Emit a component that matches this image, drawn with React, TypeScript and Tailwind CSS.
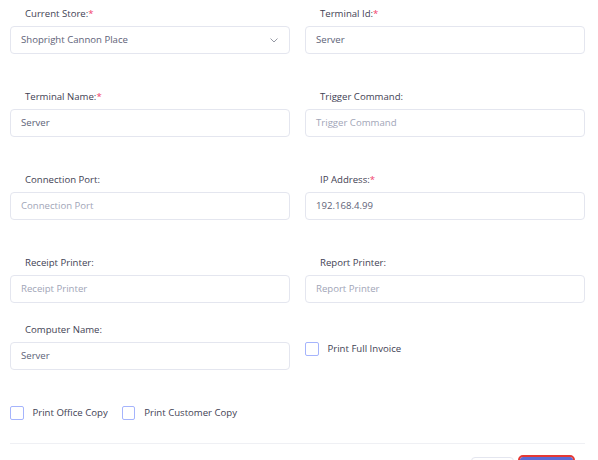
import React from "react";

const font = { fontFamily: '"Open Sans", "Noto Sans", sans-serif' };

function Label({ text, required }: { text: string; required?: boolean }) {
  return (
    <div className="h-[13px] pl-[15px] text-[9.6px] leading-[13px] font-medium text-[#3f4254] mb-[6px] whitespace-nowrap">
      {text}
      {required && <span className="text-[#f1416c]">*</span>}
    </div>
  );
}

function Input({ value, placeholder }: { value?: string; placeholder?: string }) {
  return (
    <div className="h-[28px] w-[280px] border border-[#e4e6ef] rounded-[4px] bg-white flex items-center pl-[10px] text-[9.6px]">
      {value ? (
        <span className="text-[#5e6278]">{value}</span>
      ) : (
        <span className="text-[#a1a5b7]">{placeholder}</span>
      )}
    </div>
  );
}

function Field({ label, required, value, placeholder }: { label: string; required?: boolean; value?: string; placeholder?: string }) {
  return (
    <div>
      <Label text={label} required={required} />
      <Input value={value} placeholder={placeholder} />
    </div>
  );
}

function Checkbox({ label }: { label: string }) {
  return (
    <div className="flex items-center">
      <div className="w-[13.5px] h-[13.5px] border-[1.5px] border-[#a5b4fc] rounded-[2px] bg-white" />
      <span className="ml-[9px] text-[9.6px] text-[#3f4254]">{label}</span>
    </div>
  );
}

export default function App() {
  return (
    <div className="w-[598px] h-[460px] overflow-hidden bg-white" style={font}>
      <div className="pt-[7px] pl-[10px] pr-[13px]">
        <div className="grid grid-cols-[280px_280px] gap-x-[15px]">
          <div>
            <Label text="Current Store:" required />
            <div className="h-[28px] w-[280px] border border-[#e4e6ef] rounded-[4px] bg-white flex items-center justify-between pl-[10px] pr-[11px] text-[9.6px]">
              <span className="text-[#5e6278]">Shopright Cannon Place</span>
              <svg width="8" height="5" viewBox="0 0 8 5" fill="none">
                <polyline points="0.8,0.8 4,4 7.2,0.8" stroke="#8a8d9a" strokeWidth="0.9" strokeLinecap="round" strokeLinejoin="round" />
              </svg>
            </div>
          </div>
          <Field label="Terminal Id:" required value="Server" />
        </div>

        <div className="grid grid-cols-[280px_280px] gap-x-[15px] mt-[36px]">
          <Field label="Terminal Name:" required value="Server" />
          <Field label="Trigger Command:" placeholder="Trigger Command" />
        </div>

        <div className="grid grid-cols-[280px_280px] gap-x-[15px] mt-[36px]">
          <Field label="Connection Port:" placeholder="Connection Port" />
          <Field label="IP Address:" required value="192.168.4.99" />
        </div>

        <div className="grid grid-cols-[280px_280px] gap-x-[15px] mt-[36px]">
          <Field label="Receipt Printer:" placeholder="Receipt Printer" />
          <Field label="Report Printer:" placeholder="Report Printer" />
        </div>

        <div className="grid grid-cols-[280px_280px] gap-x-[15px] mt-[20px]">
          <Field label="Computer Name:" value="Server" />
          <div className="pt-[19px]">
            <Checkbox label="Print Full Invoice" />
          </div>
        </div>

        <div className="flex items-center gap-[14px] mt-[36px]">
          <Checkbox label="Print Office Copy" />
          <Checkbox label="Print Customer Copy" />
        </div>

        <div className="mt-[23px] h-px bg-[#eff0f4]" />

        <div className="flex justify-end gap-[6px] mt-[13px] pr-[12px]">
          <button aria-label="Close" className="h-[28px] w-[43px] border border-[#e4e6ef] rounded-[4px] bg-white" />
          <button aria-label="Save" className="h-[28px] w-[53px] rounded-[3px] bg-[#5c6bd6] outline-2 outline-[#e53935]" />
        </div>
      </div>
    </div>
  );
}
